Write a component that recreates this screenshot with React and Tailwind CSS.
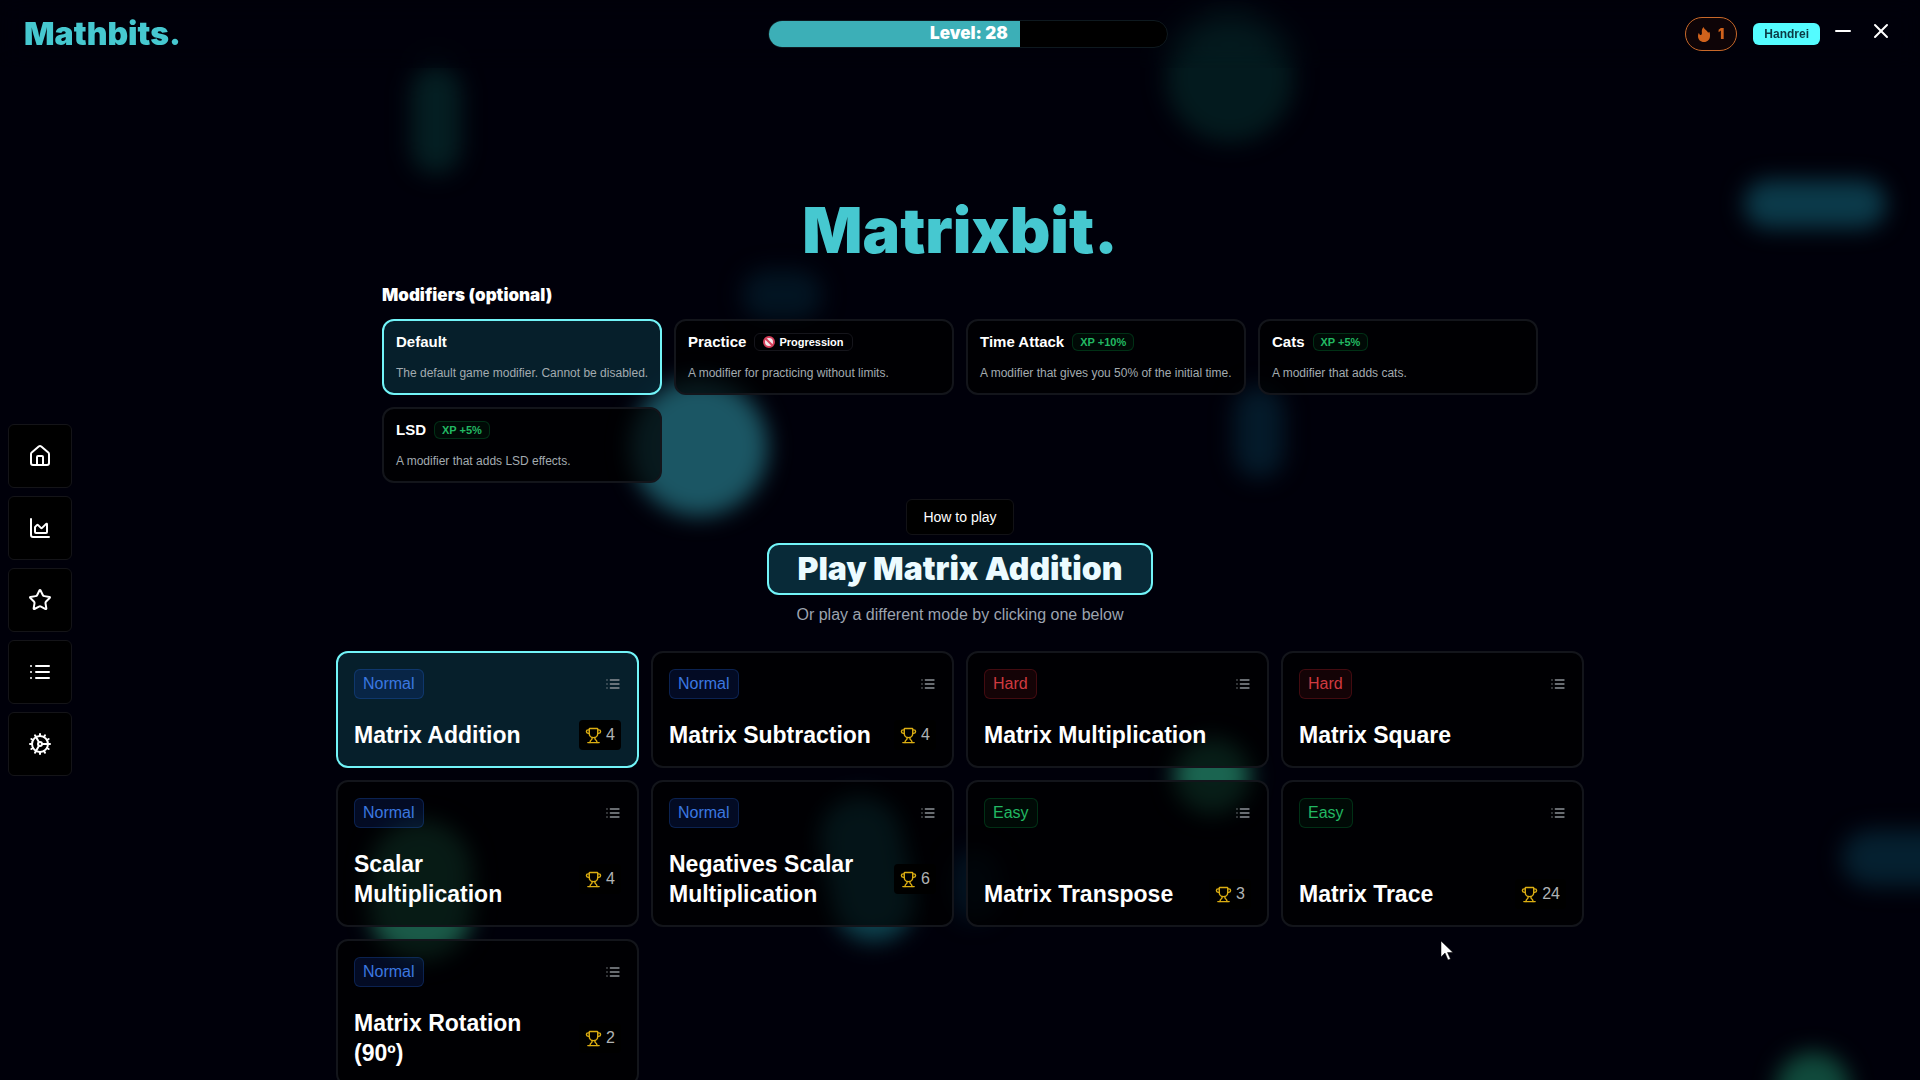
import { useState } from 'react'
import { ChartArea, Cog, House, Minus, Star, Trophy, X } from 'lucide-react'

const modifiers = [
  { name: 'Default', description: 'The default game modifier. Cannot be disabled.' },
  { name: 'Practice', noProgression: true, description: 'A modifier for practicing without limits.' },
  { name: 'Time Attack', xp: 'XP +10%', description: 'A modifier that gives you 50% of the initial time.' },
  { name: 'Cats', xp: 'XP +5%', description: 'A modifier that adds cats.' },
  { name: 'LSD', xp: 'XP +5%', description: 'A modifier that adds LSD effects.' },
]

const modes = [
  { name: 'Matrix Addition', difficulty: 'Normal', trophies: 4 },
  { name: 'Matrix Subtraction', difficulty: 'Normal', trophies: 4 },
  { name: 'Matrix Multiplication', difficulty: 'Hard' },
  { name: 'Matrix Square', difficulty: 'Hard' },
  { name: 'Scalar Multiplication', difficulty: 'Normal', trophies: 4 },
  { name: 'Negatives Scalar Multiplication', difficulty: 'Normal', trophies: 6 },
  { name: 'Matrix Transpose', difficulty: 'Easy', trophies: 3 },
  { name: 'Matrix Trace', difficulty: 'Easy', trophies: 24 },
  { name: 'Matrix Rotation (90º)', difficulty: 'Normal', trophies: 2 },
]

const difficultyStyles = {
  Easy: 'border-green-500/20 bg-green-500/5 text-[#22b862]',
  Normal: 'border-blue-500/20 bg-blue-700/15 text-[#3b78e0]',
  Hard: 'border-red-500/20 bg-red-500/8 text-[#d03a40]',
}

// floating shapes behind the page
const blobs = [
  'left-[411px] top-[66px] h-[108px] w-[50px] bg-[#041e22]',
  'left-[1166px] top-[14px] size-[128px] bg-[#031a1e]',
  'left-[1744px] top-[180px] h-[48px] w-[142px] bg-[#0b3a4a]',
  'left-[742px] top-[270px] h-[50px] w-[80px] bg-[#021422]',
  'left-[630px] top-[378px] size-[138px] bg-[#1b5664]',
  'left-[1234px] top-[386px] h-[92px] w-[50px] bg-[#041a2a]',
  'left-[370px] top-[820px] h-[140px] w-[102px] bg-[#1a5a48]',
  'left-[826px] top-[796px] h-[146px] w-[82px] bg-[#0e4450] -rotate-12',
  'left-[1174px] top-[738px] size-[76px] bg-[#1a6450]',
  'left-[950px] top-[850px] h-[70px] w-[50px] bg-[#021220]',
  'left-[1842px] top-[830px] h-[56px] w-[140px] bg-[#052030]',
  'left-[1776px] top-[1052px] size-[74px] bg-[#104a3c]',
]

function ListIcon({ size = 24 }) {
  return (
    <svg width={size} height={size} viewBox="0 0 24 24" fill="none" stroke="currentColor" strokeWidth="2" strokeLinecap="round">
      <path d="M3 6h.01M3 12h.01M3 18h.01M8 6h13M8 12h13M8 18h13" />
    </svg>
  )
}

function FlameIcon() {
  return (
    <svg width="12" height="15" viewBox="0 0 12 15" fill="currentColor">
      <path d="M5.500 0C6 2 9 3.500 10 5.500c.7.300 1.200-.3 1.300-.8.800 1.400.7 3 .7 4.300C12 12.500 9.500 15 6 15S0 12.500 0 9.200C0 7.800.4 6.500 1 5.800c.1 1.200.6 2 1.500 2.200.8 0 1.400-.6 1.400-1.500C3.900 5 3.200 2.500 5.500 0z" />
    </svg>
  )
}

function NoEntryIcon() {
  return (
    <svg width="12" height="12" viewBox="0 0 12 12">
      <circle cx="6" cy="6" r="5" fill="#f4e6ea" stroke="#d6405c" strokeWidth="2" />
      <path d="M2.500 2.500l7 7" stroke="#d6405c" strokeWidth="2" />
    </svg>
  )
}

function Header() {
  return (
    <header className="grid h-17 shrink-0 grid-cols-[1fr_auto_1fr] items-center pl-6 pr-5 backdrop-blur-md">
      <a href="#" className="justify-self-start font-[Inter,sans-serif] text-[32px] font-black text-[#46c8d0]">Mathbits.</a>

      <div className="ml-3 h-7 w-[400px] overflow-hidden rounded-full border border-[#0e191f] bg-black">
        <div className="flex h-full items-center justify-end bg-[#3cafb7] pr-3 font-[Inter,sans-serif] text-[17px] font-black text-white" style={{ width: '63%' }}>
          Level: 28
        </div>
      </div>

      <div className="flex items-center justify-self-end">
        <div className="flex h-[34px] items-center gap-2 rounded-full border border-[#c8682a] bg-[#0e0407] px-3 text-[#d0621c]">
          <FlameIcon />
          <span className="font-[Inter,sans-serif] text-sm font-black">1</span>
        </div>
        <button type="button" className="ml-4 h-[22px] rounded-md bg-[#54fcff] px-[11px] text-xs font-bold text-[#0b3a44]">Handrei</button>
        <div className="ml-1 flex pb-1.5 text-white">
          <button type="button" aria-label="Minimize" className="px-[7px]"><Minus size={24} /></button>
          <button type="button" aria-label="Close" className="px-[7px]"><X size={24} /></button>
        </div>
      </div>
    </header>
  )
}

function Sidebar() {
  const items = [
    { label: 'Home', icon: <House size={24} /> },
    { label: 'Stats', icon: <ChartArea size={24} /> },
    { label: 'Favorites', icon: <Star size={24} /> },
    { label: 'Changelog', icon: <ListIcon /> },
    { label: 'Settings', icon: <Cog size={24} /> },
  ]

  return (
    <nav className="flex w-20 shrink-0 flex-col items-center justify-center gap-2 pt-13">
      {items.map(item => (
        <a key={item.label} href="#" aria-label={item.label} className="flex size-16 items-center justify-center rounded-md border border-[#141418] bg-black text-white">
          {item.icon}
        </a>
      ))}
    </nav>
  )
}

function ModifierCard({ modifier, active, onClick }) {
  return (
    <button
      type="button"
      onClick={onClick}
      className={`rounded-xl border-2 p-3 text-left ${active ? 'border-[#72f4f8] bg-[#072431]/85' : 'border-[#13151b] bg-black/70'}`}
    >
      <span className="flex h-[18px] items-center gap-2 text-[15px] font-bold text-white">
        {modifier.name}
        {modifier.noProgression && (
          <span className="flex h-[18px] items-center gap-1 rounded-md border border-[#15151b] px-2 text-[11px]">
            <NoEntryIcon /> Progression
          </span>
        )}
        {modifier.xp && (
          <span className="flex h-[18px] items-center rounded-md border border-green-500/20 bg-green-500/5 px-[7px] text-[11px] text-[#22b862]">{modifier.xp}</span>
        )}
      </span>
      <span className="mt-3.5 block whitespace-nowrap text-xs text-[#a3abb0]">{modifier.description}</span>
    </button>
  )
}

function ModeCard({ mode, active, onClick }) {
  return (
    <div
      onClick={onClick}
      className={`flex flex-col justify-between gap-[21px] rounded-xl border-2 p-4 ${active ? 'border-[#72f4f8] bg-[#072431]/85' : 'border-[#13151b] bg-black/70'}`}
    >
      <div className="flex items-center justify-between">
        <span className={`flex h-[30px] items-center rounded-md border px-2 text-base ${difficultyStyles[mode.difficulty]}`}>{mode.difficulty}</span>
        <button type="button" aria-label={`${mode.name} leaderboard`} className="text-[#8b9096]">
          <ListIcon size={16} />
        </button>
      </div>
      <div className="flex items-center justify-between gap-4">
        <h3 className="text-[23px] font-bold leading-[30px] text-white">{mode.name}</h3>
        {mode.trophies && (
          <span className="flex h-[30px] items-center gap-1 rounded-sm bg-black px-1.5 text-base text-[#b0b3b5]">
            <Trophy size={17} className="text-[#dcae12]" />
            {mode.trophies}
          </span>
        )}
      </div>
    </div>
  )
}

function Cursor() {
  return (
    <svg className="pointer-events-none absolute left-[1440px] top-[940px]" width="14" height="22" viewBox="0 0 14 22">
      <path d="M1 1v16l4-4 3 7 2.500-1-3-6.500h5.500z" fill="#fff" stroke="#000" strokeWidth="0.500" />
    </svg>
  )
}

export default function App() {
  const [modifier, setModifier] = useState('Default')
  const [mode, setMode] = useState('Matrix Addition')

  return (
    <div className="relative isolate flex h-screen flex-col overflow-hidden bg-[#00000a] font-['Liberation_Sans',Arial,sans-serif]">
      <div className="absolute inset-0 -z-10 overflow-hidden">
        {blobs.map(blob => (
          <div key={blob} className={`absolute rounded-full blur-[11px] ${blob}`} />
        ))}
      </div>

      <Header />

      <div className="flex min-h-0 flex-1">
        <Sidebar />

        <main className="flex min-w-0 flex-1 flex-col items-center overflow-hidden pr-20 pt-[132px]">
          <h1 className="font-[Inter,sans-serif] text-[63px] font-black leading-[60px] text-[#46c8d0]">Matrixbit.</h1>

          <section className="mt-[23px] w-full max-w-[1156px]">
            <h2 className="font-[Inter,sans-serif] text-[17px] font-black leading-6 text-white">Modifiers (optional)</h2>
            <div className="mt-3 grid grid-cols-4 gap-3">
              {modifiers.map(m => (
                <ModifierCard key={m.name} modifier={m} active={m.name === modifier} onClick={() => setModifier(m.name)} />
              ))}
            </div>
          </section>

          <button type="button" className="mt-4 h-9 shrink-0 rounded-md border border-[#121216] bg-black px-4 text-sm text-white">How to play</button>
          <button type="button" className="mt-2 h-[52px] shrink-0 rounded-xl border-2 border-[#72f4f8] bg-[#082a38] px-7 font-[Inter,sans-serif] text-[32px] leading-10 font-black text-[#ecfbff]">
            Play {mode}
          </button>
          <p className="mt-2 text-base text-[#9ca3af]">Or play a different mode by clicking one below</p>

          <div className="mt-6 grid w-full max-w-[1248px] grid-cols-4 gap-3">
            {modes.map(m => (
              <ModeCard key={m.name} mode={m} active={m.name === mode} onClick={() => setMode(m.name)} />
            ))}
          </div>
        </main>
      </div>

      <Cursor />
    </div>
  )
}
